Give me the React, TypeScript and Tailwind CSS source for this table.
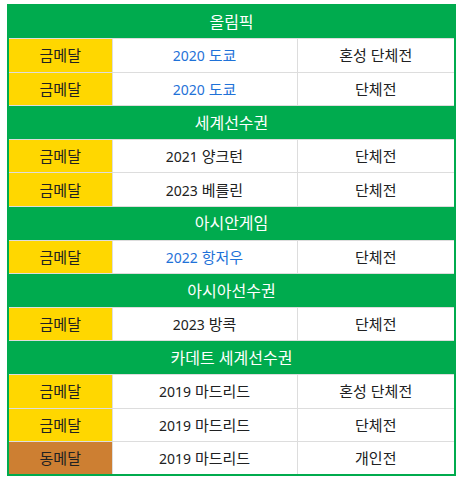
const sections = [
  {
    title: '올림픽',
    rows: [
      { medal: 'gold', year: '2020', city: '도쿄', link: true, kind: '혼성 단체전' },
      { medal: 'gold', year: '2020', city: '도쿄', link: true, kind: '단체전' },
    ],
  },
  {
    title: '세계선수권',
    rows: [
      { medal: 'gold', year: '2021', city: '양크턴', link: false, kind: '단체전' },
      { medal: 'gold', year: '2023', city: '베를린', link: false, kind: '단체전' },
    ],
  },
  {
    title: '아시안게임',
    rows: [{ medal: 'gold', year: '2022', city: '항저우', link: true, kind: '단체전' }],
  },
  {
    title: '아시아선수권',
    rows: [{ medal: 'gold', year: '2023', city: '방콕', link: false, kind: '단체전' }],
  },
  {
    title: '카데트 세계선수권',
    rows: [
      { medal: 'gold', year: '2019', city: '마드리드', link: false, kind: '혼성 단체전' },
      { medal: 'gold', year: '2019', city: '마드리드', link: false, kind: '단체전' },
      { medal: 'bronze', year: '2019', city: '마드리드', link: false, kind: '개인전' },
    ],
  },
]

export default function App() {
  return (
    <div className="min-h-screen bg-white pt-[4px] pl-[7px] font-['Noto_Sans','Noto_Sans_CJK_KR',sans-serif] text-[15px] text-[#202122]">
      <table className="w-[449px] border-collapse border-2 border-[#00ab4e] table-fixed">
        <colgroup>
          <col className="w-[104px]" />
          <col className="w-[185px]" />
          <col />
        </colgroup>
        <tbody>
          {sections.map((s) => (
            <>
              <tr key={s.title} className="h-[33.6px]">
                <th
                  colSpan={3}
                  className="bg-[#00ab4e] text-white font-normal text-[16px] text-center border border-[#ddd] p-0"
                >
                  {s.title}
                </th>
              </tr>
              {s.rows.map((r, i) => (
                <tr key={s.title + i} className="h-[33.6px]">
                  <td
                    className={
                      'border border-[#ddd] text-center p-0 ' +
                      (r.medal === 'gold' ? 'bg-[#ffd700]' : 'bg-[#cd7f32]')
                    }
                  >
                    {r.medal === 'gold' ? '금메달' : '동메달'}
                  </td>
                  <td
                    className={
                      'border border-[#ddd] text-center p-0 ' +
                      (r.link ? 'text-[#1f72d8]' : '')
                    }
                  >
                    <span className="text-[14px]">{r.year}</span> {r.city}
                  </td>
                  <td className="border border-[#ddd] text-center p-0">{r.kind}</td>
                </tr>
              ))}
            </>
          ))}
        </tbody>
      </table>
    </div>
  )
}
